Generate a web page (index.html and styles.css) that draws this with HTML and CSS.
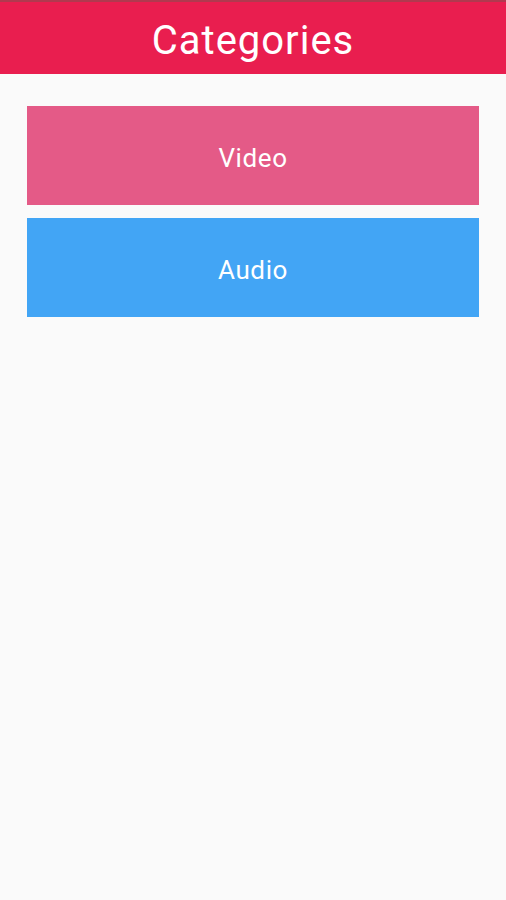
FILE: index.html
```html
<!DOCTYPE html>
<html lang="en">
<head>
  <meta charset="UTF-8" />
  <meta name="viewport" content="width=device-width, initial-scale=1.0"/>
  <title>Categories</title>
  <link rel="stylesheet" href="styles.css">
</head>
<body>
  <header class="app-bar">
    <h1>Categories</h1>
  </header>

  <main class="list">
    <a href="#" class="category video">Video</a>
    <a href="#" class="category audio">Audio</a>
  </main>
</body>
</html>
```

FILE: styles.css
```css
* {
  box-sizing: border-box;
}

body {
  margin: 0;
  font-family: Roboto, "Noto Sans", sans-serif;
  background: #fafafa;
  min-height: 100vh;
  border-top: 2px solid #b0394f;
}

.app-bar {
  height: 72px;
  padding-top: 4px;
  background: #e91e4f;
  display: flex;
  align-items: center;
  justify-content: center;
}

.app-bar h1 {
  margin: 0;
  color: #fff;
  font-size: 40px;
  font-weight: 400;
  letter-spacing: 1px;
}

.list {
  padding: 32px 27px;
  display: flex;
  flex-direction: column;
  gap: 13px;
}

.category {
  height: 99px;
  padding-top: 5px;
  display: flex;
  align-items: center;
  justify-content: center;
  color: #fff;
  font-size: 26px;
  letter-spacing: 0.6px;
  text-decoration: none;
}

.video {
  background: #e45a87;
}

.audio {
  background: #42a5f5;
}
```
